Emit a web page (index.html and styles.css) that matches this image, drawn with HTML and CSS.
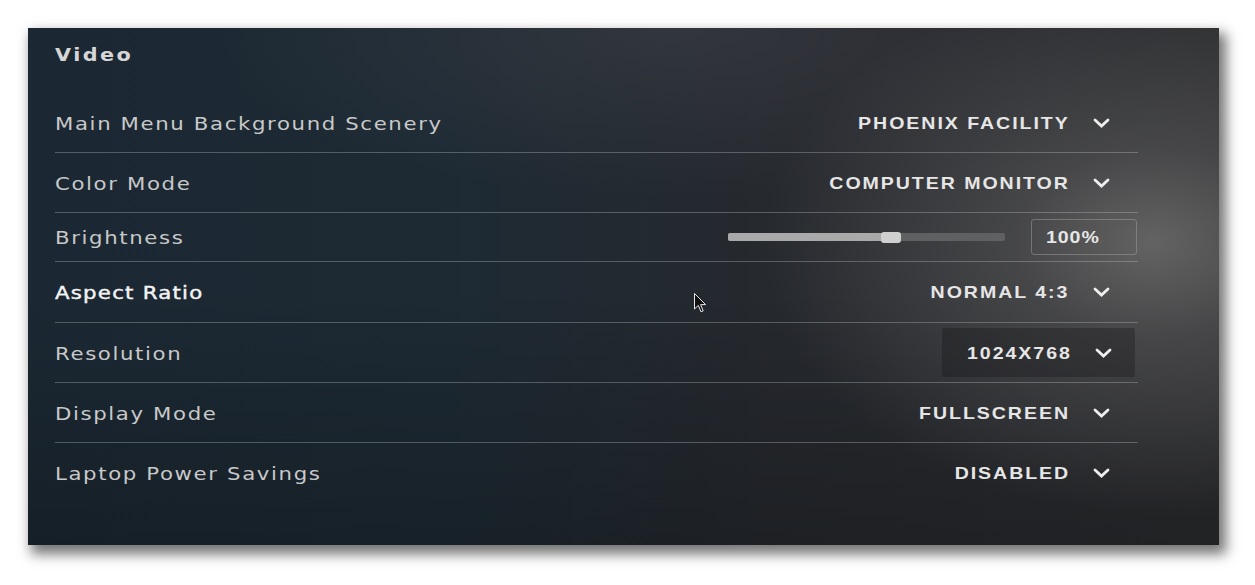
FILE: index.html
```html
<!DOCTYPE html>
<html lang="en">
<head>
<meta charset="utf-8">
<title>Video Settings</title>
<link rel="stylesheet" href="styles.css">
</head>
<body>
<div class="panel">
  <h2 class="title">Video</h2>
  <div class="rows">
    <div class="row">
      <span class="label">Main Menu Background Scenery</span>
      <div class="select"><span class="value">PHOENIX FACILITY</span><svg class="chev" viewBox="0 0 17 10" width="17" height="10"><polyline points="2,2 8.5,8 15,2"/></svg></div>
    </div>
    <div class="row">
      <span class="label">Color Mode</span>
      <div class="select"><span class="value">COMPUTER MONITOR</span><svg class="chev" viewBox="0 0 17 10" width="17" height="10"><polyline points="2,2 8.5,8 15,2"/></svg></div>
    </div>
    <div class="row row-short">
      <span class="label">Brightness</span>
      <div class="slider-group">
        <div class="slider"><div class="fill" style="width:55.6%"></div><div class="thumb" style="left:55.6%"></div></div>
        <div class="num"><span class="num-text">100%</span></div>
      </div>
    </div>
    <div class="row row-tall">
      <span class="label label-hover">Aspect Ratio</span>
      <div class="select"><span class="value">NORMAL 4:3</span><svg class="chev" viewBox="0 0 17 10" width="17" height="10"><polyline points="2,2 8.5,8 15,2"/></svg></div>
    </div>
    <div class="row">
      <span class="label">Resolution</span>
      <div class="select select-active"><span class="value">1024X768</span><svg class="chev" viewBox="0 0 17 10" width="17" height="10"><polyline points="2,2 8.5,8 15,2"/></svg></div>
    </div>
    <div class="row">
      <span class="label">Display Mode</span>
      <div class="select"><span class="value">FULLSCREEN</span><svg class="chev" viewBox="0 0 17 10" width="17" height="10"><polyline points="2,2 8.5,8 15,2"/></svg></div>
    </div>
    <div class="row row-last">
      <span class="label">Laptop Power Savings</span>
      <div class="select"><span class="value">DISABLED</span><svg class="chev" viewBox="0 0 17 10" width="17" height="10"><polyline points="2,2 8.5,8 15,2"/></svg></div>
    </div>
  </div>
  <svg class="cursor" viewBox="0 0 13 20" width="13" height="20"><path d="M0.5,0.5 L0.5,16 L4.3,12.4 L7,18.8 L9.2,17.9 L6.6,11.6 L11.6,11.6 Z"/></svg>
</div>
</body>
</html>
```
FILE: styles.css
```css
html, body {
  margin: 0;
  padding: 0;
  background: #ffffff;
}
html {
  overflow: hidden;
}
body {
  height: 585px;
  overflow: hidden;
}
.panel {
  position: relative;
  margin: 28px 0 0 28px;
  width: 1191px;
  height: 517px;
  box-sizing: border-box;
  padding: 17px 81px 0 27px;
  background:
    radial-gradient(ellipse 390px 270px at 1125px 215px, rgba(102,102,102,0.95) 0%, rgba(82,82,83,0.7) 35%, rgba(60,60,62,0) 100%),
    radial-gradient(ellipse 460px 170px at 640px 0px, rgba(60,62,70,0.6) 0%, rgba(58,60,68,0) 100%),
    linear-gradient(180deg, rgba(0,0,0,0) 50%, rgba(0,0,0,0.22) 100%),
    linear-gradient(90deg, #1b2833 0%, #1d2a34 35%, #26292e 62%, #2b2c2f 100%);
  box-shadow: 5px 7px 12px 2px rgba(0,0,0,0.55);
  font-family: "DejaVu Sans", Verdana, sans-serif;
}
.title {
  width: fit-content;
  margin: 0 0 28px 0;
  height: 20px;
  line-height: 20px;
  font-size: 17px;
  font-weight: bold;
  letter-spacing: 2px;
  color: #d6d6d6;
  transform: scaleX(1.22);
  transform-origin: left center;
}
.rows {
  display: flex;
  flex-direction: column;
}
.row {
  display: flex;
  align-items: center;
  justify-content: space-between;
  height: 59px;
  border-bottom: 1px solid rgba(200,205,210,0.32);
}
.row-short { height: 48px; }
.row-tall { height: 60px; }
.row-last { border-bottom: none; }
.label {
  display: inline-block;
  padding-top: 2px;
  font-size: 17px;
  letter-spacing: 1.3px;
  color: #c9c9c9;
  transform: scaleX(1.25);
  transform-origin: left center;
}
.label-hover {
  color: #f4f4f4;
  -webkit-text-stroke: 0.4px #f4f4f4;
  letter-spacing: 1px;
}
.select {
  display: flex;
  align-items: center;
  gap: 21px;
  height: 49px;
  box-sizing: border-box;
  padding: 0 25px 0 16px;
  margin-right: 3px;
  border-radius: 2px;
}
.select-active {
  background: rgba(18,18,20,0.3);
  padding-right: 23px;
  width: 193px;
  justify-content: flex-end;
}
.value {
  display: inline-block;
  padding-top: 2px;
  padding-right: 2px;
  font-family: "Liberation Sans", Arial, sans-serif;
  font-weight: bold;
  font-size: 17px;
  letter-spacing: 1.7px;
  color: #e6e6e6;
  line-height: 20px;
  transform: scaleX(1.15);
  transform-origin: right center;
}
.chev {
  display: block;
  fill: none;
  stroke: #eeeeee;
  stroke-width: 2.8;
  stroke-linecap: round;
  stroke-linejoin: miter;
}
.slider-group {
  display: flex;
  align-items: center;
  gap: 26px;
  margin-right: 1px;
}
.slider {
  position: relative;
  width: 277px;
  height: 8px;
  background: #5f6062;
  border-radius: 2px;
}
.fill {
  height: 100%;
  background: #a9a9a9;
  border-radius: 2px 0 0 2px;
}
.thumb {
  position: absolute;
  top: -1px;
  width: 20px;
  height: 11px;
  margin-left: -1px;
  background: #cfcfcf;
  border-radius: 3px;
}
.num {
  width: 106px;
  height: 36px;
  box-sizing: border-box;
  border: 1px solid rgba(160,160,160,0.5);
  border-radius: 3px;
  padding: 2px 0 0 14px;
  display: flex;
  align-items: center;
}
.num-text {
  display: inline-block;
  font-family: "Liberation Sans", Arial, sans-serif;
  font-weight: bold;
  font-size: 17px;
  letter-spacing: 0.8px;
  color: #e6e6e6;
  transform: scaleX(1.15);
  transform-origin: left center;
}
.cursor {
  position: absolute;
  left: 666px;
  top: 265px;
  fill: #111111;
  stroke: #e8e8e8;
  stroke-width: 1;
}
```
